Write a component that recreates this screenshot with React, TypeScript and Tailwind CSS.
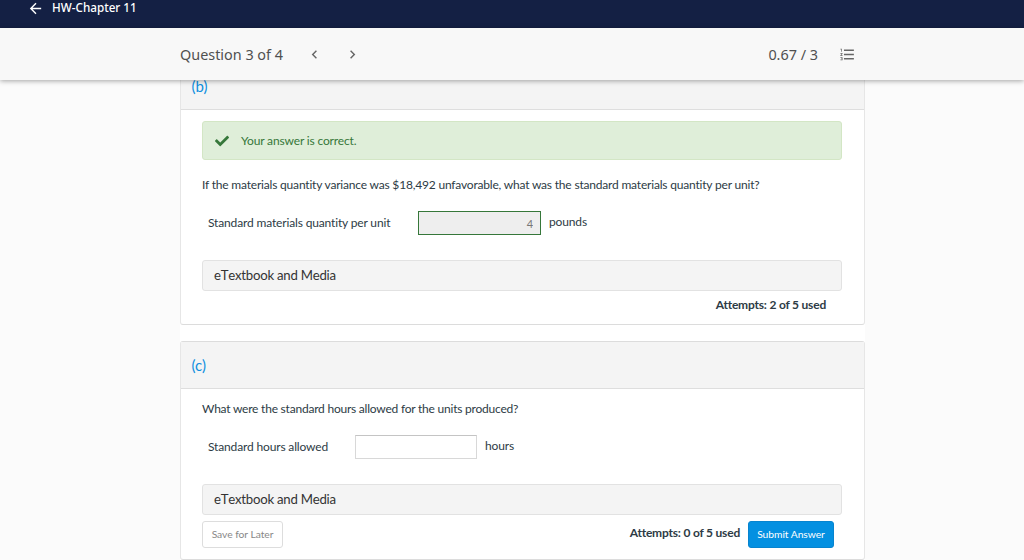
import { ReactNode } from 'react'
import { FaCheck } from 'react-icons/fa'
import { MdArrowBack, MdChevronLeft, MdChevronRight, MdFormatListNumbered } from 'react-icons/md'

function Part({ label, children }: { label: string; children: ReactNode }) {
  return (
    <section className="rounded-[3px] border border-[#dcdcdc] border-x-[#e6e6e6] bg-white">
      <header className="flex h-[47px] items-center border-b border-[#dedede] bg-[#f4f4f4] pl-[10.5px]">
        <h2 className="text-[15px] leading-5 tracking-normal text-[#0f8fdf]">{label}</h2>
      </header>
      <div className="pl-[21px] pr-[22px]">{children}</div>
    </section>
  )
}

function MediaBar() {
  return (
    <button className="flex h-[31px] w-full items-center rounded-[3px] border border-[#e2e2e2] bg-[#f4f4f4] pl-[11px] text-[13.2px] tracking-[-0.24px] text-[#333] [font-kerning:none]">
      <span>eTextbook and Media</span>
    </button>
  )
}

function TopBar() {
  return (
    <div className="flex h-7 items-start bg-[#142044] pl-[27px] text-white">
      <MdArrowBack className="h-[17px] w-[17px]" />
      <span className="ml-2 font-['Noto_Sans'] text-[11.7px] font-medium leading-[15px]">HW-Chapter 11</span>
    </div>
  )
}

function QuestionBar() {
  return (
    <div className="relative z-10 flex h-[52px] items-center bg-[#f8f8f8] pl-[180px] pr-[168px] font-['Noto_Sans'] text-[14.4px] text-[#505050] shadow-[0_1px_5px_rgba(0,0,0,0.35)]">
      <span className="w-[126px] pt-px">Question 3 of 4</span>
      <MdChevronLeft className="h-[17px] w-[17px] text-[#666]" />
      <MdChevronRight className="ml-[21px] h-[17px] w-[17px] text-[#666]" />
      <span className="ml-auto pt-px">0.67 / 3</span>
      <MdFormatListNumbered className="ml-[21px] h-[17px] w-[17px] text-[#666]" />
    </div>
  )
}

export default function App() {
  return (
    <div className="h-[560px] overflow-hidden bg-[#fbfbfb] font-[Lato,sans-serif] text-[12px] text-[#2d3b45] [font-variant-ligatures:none]">
      <TopBar />
      <QuestionBar />

      <main className="-mt-[18px] ml-[180px] w-[685px] space-y-4 bg-white tracking-[-0.15px]">
        <Part label="(b)">
          <div className="mt-[11px] flex h-[39px] items-center rounded-[3px] border border-[#d3e6c5] bg-[#dfeed9] pl-3 text-[#36773a]">
            <FaCheck className="h-[14px] w-[14px]" />
            <span className="ml-3">Your answer is correct.</span>
          </div>
          <p className="mt-4 leading-[18px] tracking-[-0.19px]">
            <span>If the materials quantity variance was $18,492 unfavorable, what was the standard materials quantity per unit?</span>
          </p>
          <div className="mt-[17px] flex h-6 items-center pl-[6px]">
            <label className="w-[210px]"><span>Standard materials quantity per unit</span></label>
            <input
              className="h-6 w-[123px] border border-[#36773a] bg-[#eee] pr-[7px] text-right text-[11px] text-[#777]"
              defaultValue="4"
              readOnly
            />
            <span className="-mt-[2px] ml-2">pounds</span>
          </div>
          <div className="mt-[25px]">
            <MediaBar />
          </div>
          <div className="flex h-[33px] justify-end pr-4 pt-[5px] font-bold leading-[18px] tracking-[-0.2px]">
            <span>Attempts: 2 of 5 used</span>
          </div>
        </Part>

        <Part label="(c)">
          <p className="mt-[11px] leading-[18px] tracking-[-0.22px]">
            <span>What were the standard hours allowed for the units produced?</span>
          </p>
          <div className="mt-[17px] flex h-6 items-center pl-[6px]">
            <label className="w-[147px]"><span>Standard hours allowed</span></label>
            <input className="h-6 w-[122px] border border-[#d8d8d8] border-t-[#c4c4c4] bg-white pr-[7px] text-right text-[11px]" />
            <span className="-mt-[2px] ml-2">hours</span>
          </div>
          <div className="mt-[25px]">
            <MediaBar />
          </div>
          <div className="flex h-[44px] items-start pr-2 pt-[6px]">
            <button className="h-[27px] w-[81px] rounded-[3px] border border-[#ddd] bg-white text-[10.3px] tracking-[-0.05px] text-[#888]">
              <span>Save for Later</span>
            </button>
            <span className="ml-auto mt-[3px] font-bold leading-[18px] tracking-[-0.2px]">Attempts: 0 of 5 used</span>
            <button className="ml-2 h-[27px] w-[86px] rounded-[3px] border border-[#0784cf] bg-[#0490e1] text-[10.3px] tracking-[-0.05px] text-white">
              <span>Submit Answer</span>
            </button>
          </div>
        </Part>
      </main>
    </div>
  )
}
